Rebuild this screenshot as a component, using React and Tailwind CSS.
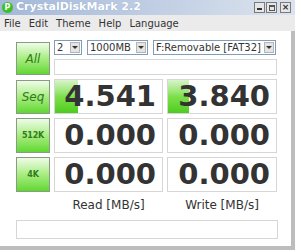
import React from 'react';

const ui = { fontFamily: '"DejaVu Sans", Verdana, sans-serif' };
const big = { fontFamily: '"DejaVu Sans", Verdana, sans-serif' };

// green test button on the left
function TestButton({ label, small, className = '' }) {
  return (
    <div
      className={`flex items-center justify-center border border-[#8a9a86] bg-gradient-to-b from-[#eefce6] via-[#a8ec80] to-[#5fd82c] text-[#2f7d1c] ${className}`}
    >
      <span className={small ? 'text-[8px] font-bold tracking-tight' : 'text-[12px] italic'} style={ui}>
        {label}
      </span>
    </div>
  );
}

function Score({ value, bar }) {
  return (
    <div className="relative flex items-center justify-end overflow-hidden border border-[#d6d6d6] bg-white pr-[6px]">
      {bar ? (
        <div className="absolute left-0 top-0 bottom-0 bg-gradient-to-b from-[#d8f4c8] via-[#7ee04a] to-[#4ccc1c]" style={{ width: bar }} />
      ) : null}
      <span className="relative text-[29px] font-bold leading-none text-[#333333]" style={big}>
        {value}
      </span>
    </div>
  );
}

function Combo({ text, className = '' }) {
  return (
    <div className={`flex h-[15px] items-center justify-between border border-[#7f9db9] bg-white pl-[2px] pr-[1px] ${className}`}>
      <span className="text-[10px] leading-none text-[#333]" style={ui}>{text}</span>
      <div className="flex h-[11px] w-[10px] items-center justify-center border border-[#b5b5b5] bg-[#e4e4e4]">
        <div className="h-0 w-0 border-l-[3px] border-r-[3px] border-t-[3px] border-l-transparent border-r-transparent border-t-[#333]" />
      </div>
    </div>
  );
}

export default function App() {
  return (
    <div className="flex h-[250px] w-[295px] flex-col bg-[#bdbdbd]" style={ui}>
      {/* Title bar */}
      <div className="flex h-[15px] items-center bg-gradient-to-r from-[#a4b8d8] to-[#dbe3ee] pl-[2px] pr-[4px]">
        <div className="flex h-[11px] w-[11px] items-center justify-center rounded-full bg-[#3fbf2a]">
          <span className="text-[8px] font-bold leading-none text-white">P</span>
        </div>
        <span className="ml-[3px] text-[11px] font-bold text-white [text-shadow:0_0_1px_#8aa0c0]">CrystalDiskMark 2.2</span>
        <div className="ml-auto flex gap-[1px]">
          <div className="flex h-[11px] w-[11px] items-end justify-center border border-[#7a7a7a] bg-[#e6e6e6] pb-[2px]">
            <div className="h-[2px] w-[5px] bg-[#333]" />
          </div>
          <div className="flex h-[11px] w-[11px] items-center justify-center border border-[#7a7a7a] bg-[#e6e6e6]">
            <div className="h-[6px] w-[6px] border border-t-2 border-[#555]" />
          </div>
          <div className="ml-[2px] flex h-[11px] w-[11px] items-center justify-center border border-[#7a7a7a] bg-[#e6e6e6] text-[9px] font-bold leading-none text-[#333]">
            ×
          </div>
        </div>
      </div>

      {/* Menu bar */}
      <div className="flex h-[16px] items-center gap-[8px] bg-[#ebebeb] pl-[4px] text-[10px] text-[#333]">
        <span>File</span>
        <span>Edit</span>
        <span>Theme</span>
        <span>Help</span>
        <span>Language</span>
      </div>

      {/* Client area */}
      <div className="mr-[4px] mb-[4px] flex flex-1 flex-col bg-white pl-[16px] pr-[13px] pt-[9px]">
        <div className="grid grid-cols-[34px_109px_110px] grid-rows-[15px_16px_35px_35px_35px] gap-x-[4px] gap-y-[4px]">
          <TestButton label="All" className="row-span-2 mt-[2px]" />
          <div className="col-span-2 flex gap-[5px]">
            <Combo text="2" className="w-[28px]" />
            <Combo text="1000MB" className="w-[61px]" />
            <Combo text="F:Removable [FAT32]" className="w-[123px]" />
          </div>
          <div className="col-span-2 border border-[#d6d6d6] bg-white" />

          <TestButton label="Seq" className="mt-[1px]" />
          <Score value="4.541" bar="23px" />
          <Score value="3.840" bar="21px" />

          <TestButton label="512K" small />
          <Score value="0.000" />
          <Score value="0.000" />

          <TestButton label="4K" small />
          <Score value="0.000" />
          <Score value="0.000" />

          <div />
          <div className="text-center text-[12px] text-[#333]">Read [MB/s]</div>
          <div className="text-center text-[12px] text-[#333]">Write [MB/s]</div>
        </div>
        <div className="mt-[6px] h-[19px] border border-[#d6d6d6] bg-white" />
      </div>
    </div>
  );
}
